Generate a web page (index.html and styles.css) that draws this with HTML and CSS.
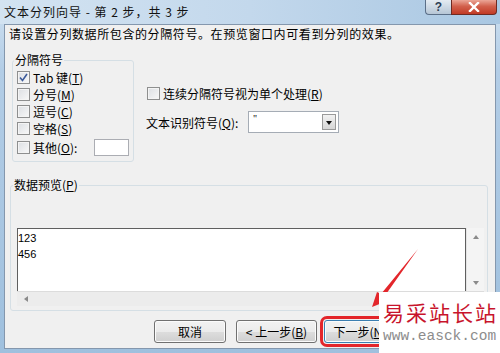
FILE: index.html
```html
<!DOCTYPE html>
<html lang="zh-CN">

<head>
    <meta charset="UTF-8">
    <title>文本分列向导</title>
    <link rel="stylesheet" href="styles.css">
</head>

<body>
    <div class="window">
        <div class="titlebar">
            <span class="title">文本分列向导 - 第 2 步，共 3 步</span>
            <div class="caption">
                <span class="cap help">?</span>
                <span class="cap close">
                    <svg width="12" height="10" viewBox="0 0 12 10">
                        <path d="M2 1 L10 9 M10 1 L2 9" stroke="#fff" stroke-width="2.4" stroke-linecap="square" />
                    </svg>
                </span>
            </div>
        </div>

        <div class="client">
            <p class="intro">请设置分列数据所包含的分隔符号。在预览窗口内可看到分列的效果。</p>

            <div class="top">
                <fieldset class="group delims">
                    <legend>分隔符号</legend>
                    <label class="check"><span class="box checked">
                            <svg width="9" height="9" viewBox="0 0 9 9">
                                <path d="M1 4.5 L3.5 7.5 L8 1" fill="none" stroke="#3c5a9a" stroke-width="1.6" />
                            </svg>
                        </span>Tab 键(<u>T</u>)</label>
                    <label class="check"><span class="box"></span>分号(<u>M</u>)</label>
                    <label class="check"><span class="box"></span>逗号(<u>C</u>)</label>
                    <label class="check"><span class="box"></span>空格(<u>S</u>)</label>
                    <label class="check other"><span class="box"></span>其他(<u>O</u>):<span class="textbox"></span></label>
                </fieldset>

                <div class="options">
                    <label class="check"><span class="box"></span>连续分隔符号视为单个处理(<u>R</u>)</label>
                    <div class="qualifier">
                        <span class="qlabel">文本识别符号(<u>Q</u>):</span>
                        <div class="combo">
                            <span class="value">"</span>
                            <span class="drop"></span>
                        </div>
                    </div>
                </div>
            </div>

            <fieldset class="group preview">
                <legend>数据预览(<u>P</u>)</legend>
                <div class="grid">
                    <div class="data">123<br>456</div>
                    <div class="vscroll"><span class="arr up"></span><span class="arr down"></span></div>
                    <div class="hscroll"><span class="arr left"></span></div>
                </div>
            </fieldset>

            <div class="buttons">
                <button class="btn cancel">取消</button>
                <button class="btn prev">&lt; 上一步(<u>B</u>)</button>
                <button class="btn next">下一步(<u>N</u>) &gt;</button>
            </div>
        </div>

        <svg class="arrow" width="500" height="353" viewBox="0 0 500 353">
            <polygon points="418,249 384,297 387,301 372,307 377,292 381,294" fill="#e3262b" />
        </svg>

        <div class="watermark">
            <div class="wm-cn">易采站长站</div>
            <div class="wm-en">www.easck.com</div>
        </div>
    </div>
</body>

</html>
```

FILE: styles.css
```css
* {
    box-sizing: border-box;
}

body {
    margin: 0;
    width: 500px;
    height: 353px;
    overflow: hidden;
    font-family: "Noto Sans CJK SC", "Liberation Sans", sans-serif;
    font-size: 12px;
    color: #000;
}

.window {
    position: relative;
    height: 353px;
    display: flex;
    flex-direction: column;
    background: linear-gradient(180deg, #cfe1f1, #b3cde6 20%, #9fc0de);
}

.titlebar {
    height: 24px;
    display: flex;
    justify-content: space-between;
    align-items: flex-start;
    padding-left: 4px;
    background: linear-gradient(90deg, #d3e3f1, #c3d8ec 50%, #a9c7e2);
}

.title {
    line-height: 24px;
    letter-spacing: 1px;
    color: #111;
}

.caption {
    display: flex;
    margin-right: 3px;
}

.cap {
    height: 15px;
    display: flex;
    align-items: center;
    justify-content: center;
    border: 1px solid #5b6f88;
    border-top: 0;
}

.help {
    width: 26px;
    border-radius: 0 0 0 4px;
    border-right: 0;
    background: linear-gradient(#e4ebf2, #b6c6d6);
    color: #2c3d55;
    font-family: "Liberation Sans", sans-serif;
    font-weight: bold;
    font-size: 12px;
}

.close {
    width: 46px;
    border-radius: 0 0 4px 0;
    border-color: #6e2a22;
    background: linear-gradient(#eba697, #d2604c 45%, #c13a25);
}

.client {
    flex: 1;
    margin: 0 4px 4px;
    border: 1px solid #8497ad;
    background: #f0f0f0;
    display: flex;
    flex-direction: column;
}

.intro {
    margin: 0;
    padding: 1px 0 0 4px;
    line-height: 16px;
    letter-spacing: 0.6px;
}

.top {
    display: flex;
    align-items: flex-start;
    gap: 12px;
    margin-top: 10px;
    padding-left: 7px;
}

.group {
    margin: 0;
    border: 1px solid #d5dfe5;
    border-radius: 3px;
}

.group legend {
    padding: 0 1px;
    line-height: 16px;
}

.delims {
    width: 122px;
    height: 110px;
    padding: 1px 4px 5px 4px;
}

.delims legend {
    margin-left: -3px;
}

.check {
    display: flex;
    align-items: center;
    height: 17px;
    white-space: nowrap;
}

.box {
    width: 13px;
    height: 13px;
    margin-right: 3px;
    border: 1px solid #8e8f8f;
    background: linear-gradient(135deg, #dcdfe3, #f8f8f8);
    box-shadow: inset 0 0 0 1px #f4f4f4;
    display: flex;
    align-items: center;
    justify-content: center;
}

.other {
    margin-top: 2px;
}

.textbox {
    margin-left: auto;
    width: 35px;
    height: 17px;
    background: #fff;
    border: 1px solid #abadb3;
}

.options {
    padding-top: 33px;
    padding-left: 1px;
}

.qualifier {
    display: flex;
    align-items: center;
    margin-top: 9px;
    margin-left: -1px;
}

.qlabel {
    width: 102px;
}

.combo {
    width: 91px;
    height: 22px;
    background: #fff;
    border: 1px solid #a5acb5;
    display: flex;
    align-items: flex-start;
    justify-content: space-between;
    padding: 2px 2px 2px 4px;
}

.value {
    font-family: "Liberation Serif", serif;
    font-size: 10px;
    line-height: 10px;
}

.drop {
    width: 14px;
    height: 16px;
    border: 1px solid #9a9a9a;
    background: linear-gradient(#f2f2f2, #d6d6d6);
    position: relative;
}

.drop::after {
    content: "";
    position: absolute;
    left: 3px;
    top: 6px;
    border-left: 3.5px solid transparent;
    border-right: 3.5px solid transparent;
    border-top: 4px solid #111;
}

.preview {
    width: 478px;
    height: 134px;
    margin: 15px 0 0 5px;
    padding: 35px 3px 4px 6px;
}

.preview legend {
    margin-left: -4px;
}

.grid {
    display: grid;
    grid-template-columns: 449px 18px;
    grid-template-rows: 63px 15px;
}

.data {
    background: #fff;
    border: 1px solid #5f5f5f;
    border-bottom: 0;
    padding: 1px 0 0 0;
    line-height: 16px;
    font-family: "Liberation Sans", sans-serif;
    font-size: 11px;
}

.vscroll {
    background: #f4f4f4;
    border-left: 1px solid #e4e4e4;
    display: flex;
    flex-direction: column;
    justify-content: space-between;
    align-items: center;
    padding: 7px 0 6px;
}

.hscroll {
    grid-column: 1 / 3;
    background: #ececec;
    border-top: 1px solid #dcdcdc;
    display: flex;
    align-items: center;
    padding-left: 7px;
}

.arr {
    width: 0;
    height: 0;
}

.up {
    border-left: 3.5px solid transparent;
    border-right: 3.5px solid transparent;
    border-bottom: 4px solid #8a8a8a;
}

.down {
    border-left: 3.5px solid transparent;
    border-right: 3.5px solid transparent;
    border-top: 4px solid #8a8a8a;
}

.left {
    border-top: 3.5px solid transparent;
    border-bottom: 3.5px solid transparent;
    border-right: 4px solid #8a8a8a;
}

.buttons {
    display: flex;
    gap: 9px;
    margin-top: 9px;
    padding-left: 149px;
}

.btn {
    height: 23px;
    padding: 0;
    border: 1px solid #707070;
    border-radius: 3px;
    background: linear-gradient(#f2f2f2, #ebebeb 50%, #dddddd 51%, #cfcfcf);
    box-shadow: inset 0 0 0 1px #fbfbfb;
    font-family: "Noto Sans CJK SC", sans-serif;
    font-size: 12px;
    color: #000;
}

.cancel {
    width: 72px;
    margin-right: 1px;
}

.prev,
.next {
    width: 81px;
}

.next {
    margin-left: -2px;
    border-color: #3c7fb1;
    outline: 3px solid #e3262b;
    outline-offset: 1px;
}

.arrow {
    position: absolute;
    left: 0;
    top: 0;
}

.watermark {
    position: absolute;
    right: 0;
    bottom: 0;
    width: 121px;
    height: 61px;
    background: #fff;
    padding: 5px 0 0 4px;
}

.wm-cn {
    font-size: 21px;
    line-height: 30px;
    letter-spacing: 2px;
    color: #c8142c;
}

.wm-en {
    font-family: "Liberation Mono", monospace;
    font-size: 14.5px;
    line-height: 18px;
    color: #8c8c8c;
}
```
